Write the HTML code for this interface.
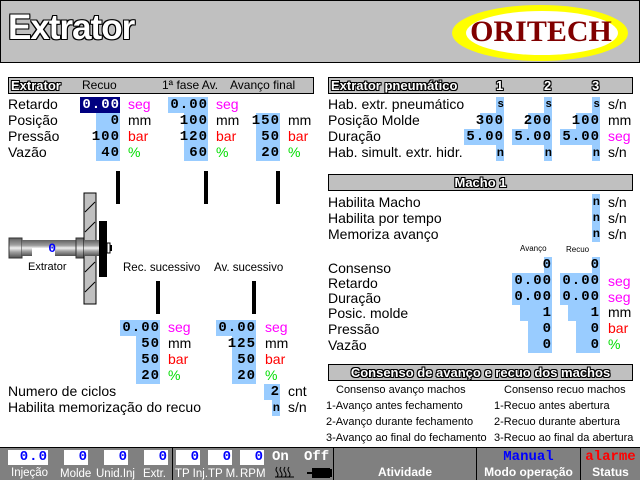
<!DOCTYPE html>
<html><head><meta charset="utf-8"><style>
*{margin:0;padding:0;box-sizing:border-box}
body{width:640px;height:480px;background:#fff;position:relative;overflow:hidden;font-family:"Liberation Sans","DejaVu Sans",sans-serif;font-size:13px;color:#000}
div,span{position:absolute}
.l{font-size:14px;line-height:16px;white-space:nowrap}
.s{font-size:11px;line-height:12px;white-space:nowrap}
.b{background:#99ccff;font-family:"Liberation Mono","DejaVu Sans Mono",monospace;font-weight:bold;font-size:14px;line-height:16px;height:16px;text-align:right;letter-spacing:1px;overflow:visible;direction:rtl}
.bar{background:#c0c0c0;border:1px solid #000;height:17px}
.ot{color:#fff;font-weight:bold;text-shadow:1px 0 #000,-1px 0 #000,0 1px #000,0 -1px #000,1px 1px #000,-1px -1px #000,1px -1px #000,-1px 1px #000;white-space:nowrap}
.m{color:#ff00ff}.r{color:#ff0000}.g{color:#00dd00}
.vb{background:#000;width:4px}
.wb{background:#fff;font-family:"Liberation Mono",monospace;font-weight:bold;color:#0000ff;font-size:14px;line-height:15px;height:15px;text-align:right;letter-spacing:1px;direction:rtl}
.fl{color:#fff;font-size:11.5px;line-height:12px;white-space:nowrap}
</style></head><body>
<!-- header -->
<div style="left:0;top:0;width:640px;height:63px;background:#c0c0c0;border:1px solid #000"></div>
<div class="ot" style="left:8px;top:9px;font-size:35px;line-height:38px;letter-spacing:-1px">Extrator</div>
<div style="left:452px;top:5px;width:176px;height:56px;border-radius:50%;background:#ffff00"></div>
<div style="left:466px;top:11px;width:152px;height:44px;border-radius:50%;background:#fff"></div>
<div style="left:456px;top:15px;width:170px;text-align:center;font-family:'Liberation Serif',serif;font-weight:bold;font-size:30px;line-height:34px;color:#800000">ORITECH</div>

<!-- left header -->
<div class="bar" style="left:8px;top:77px;width:306px"></div>
<div class="ot" style="left:11px;top:78px;font-size:13px;line-height:15px">Extrator</div>
<div class="s" style="left:82px;top:79px;font-size:12px">Recuo</div>
<div class="s" style="left:162px;top:79px;font-size:12px">1ª fase Av.</div>
<div class="s" style="left:230px;top:79px;font-size:12px">Avanço final</div>

<div class="l" style="left:8px;top:96px">Retardo</div>
<div class="l" style="left:8px;top:112px">Posição</div>
<div class="l" style="left:8px;top:128px">Pressão</div>
<div class="l" style="left:8px;top:144px">Vazão</div>

<div class="b" style="left:80px;top:97px;width:40px;background:#000080;color:#fff">0.00</div>
<div class="b" style="left:96px;top:113px;width:24px">0</div>
<div class="b" style="left:96px;top:129px;width:24px">100</div>
<div class="b" style="left:96px;top:145px;width:24px">40</div>
<div class="l m" style="left:128px;top:96px">seg</div>
<div class="l" style="left:128px;top:112px">mm</div>
<div class="l r" style="left:128px;top:128px">bar</div>
<div class="l g" style="left:128px;top:144px">%</div>

<div class="b" style="left:168px;top:97px;width:40px">0.00</div>
<div class="b" style="left:184px;top:113px;width:24px">100</div>
<div class="b" style="left:184px;top:129px;width:24px">120</div>
<div class="b" style="left:184px;top:145px;width:24px">60</div>
<div class="l m" style="left:216px;top:96px">seg</div>
<div class="l" style="left:216px;top:112px">mm</div>
<div class="l r" style="left:216px;top:128px">bar</div>
<div class="l g" style="left:216px;top:144px">%</div>

<div class="b" style="left:256px;top:113px;width:24px">150</div>
<div class="b" style="left:256px;top:129px;width:24px">50</div>
<div class="b" style="left:256px;top:145px;width:24px">20</div>
<div class="l" style="left:288px;top:112px">mm</div>
<div class="l r" style="left:288px;top:128px">bar</div>
<div class="l g" style="left:288px;top:144px">%</div>

<div class="vb" style="left:116px;top:171px;height:33px"></div>
<div class="vb" style="left:204px;top:171px;height:33px"></div>
<div class="vb" style="left:276px;top:171px;height:33px"></div>

<!-- mechanism -->
<svg style="position:absolute;left:0;top:180px" width="120" height="130">
<defs><linearGradient id="cy" x1="0" y1="0" x2="0" y2="1">
<stop offset="0" stop-color="#606060"/><stop offset="0.35" stop-color="#a0a0a0"/><stop offset="0.5" stop-color="#f0f0f0"/><stop offset="0.7" stop-color="#a0a0a0"/><stop offset="1" stop-color="#505050"/></linearGradient></defs>
<rect x="9" y="58" width="13" height="20" fill="url(#cy)" stroke="#333"/>
<rect x="22" y="60" width="54" height="16" fill="url(#cy)"/>
<rect x="32" y="68" width="23" height="8" fill="#fff"/>
<rect x="76" y="58" width="8" height="20" fill="url(#cy)" stroke="#333"/>
<rect x="84" y="13" width="12" height="111" fill="#c0c0c0" stroke="#000"/>
<path d="M85 32 L95 22 M85 52 L95 42 M85 72 L95 62 M85 92 L95 82 M85 112 L95 102" stroke="#000"/>
<rect x="84" y="60" width="22" height="16" fill="url(#cy)"/>
<rect x="99" y="41" width="8" height="56" fill="#000"/>
<rect x="107" y="63" width="3" height="10" fill="#fff" stroke="#000"/>
<rect x="110" y="65" width="2" height="6" fill="#000"/>
</svg>
<div style="left:32px;top:242px;width:24px;text-align:right;font-family:'Liberation Mono',monospace;font-weight:bold;font-size:13px;color:#0000ff;line-height:14px">0</div>
<div class="s" style="left:28px;top:261px;font-size:11px">Extrator</div>

<div class="s" style="left:123px;top:262px;font-size:11.5px">Rec. sucessivo</div>
<div class="s" style="left:214px;top:262px;font-size:11.5px">Av. sucessivo</div>
<div class="vb" style="left:156px;top:281px;height:33px"></div>
<div class="vb" style="left:252px;top:281px;height:33px"></div>

<div class="b" style="left:120px;top:320px;width:40px">0.00</div>
<div class="b" style="left:136px;top:336px;width:24px">50</div>
<div class="b" style="left:136px;top:352px;width:24px">50</div>
<div class="b" style="left:136px;top:368px;width:24px">20</div>
<div class="l m" style="left:168px;top:319px">seg</div>
<div class="l" style="left:168px;top:335px">mm</div>
<div class="l r" style="left:168px;top:351px">bar</div>
<div class="l g" style="left:168px;top:367px">%</div>

<div class="b" style="left:216px;top:320px;width:40px">0.00</div>
<div class="b" style="left:232px;top:336px;width:24px">125</div>
<div class="b" style="left:232px;top:352px;width:24px">50</div>
<div class="b" style="left:232px;top:368px;width:24px">20</div>
<div class="l m" style="left:265px;top:319px">seg</div>
<div class="l" style="left:265px;top:335px">mm</div>
<div class="l r" style="left:265px;top:351px">bar</div>
<div class="l g" style="left:265px;top:367px">%</div>

<div class="l" style="left:8px;top:383px">Numero de ciclos</div>
<div class="l" style="left:8px;top:399px">Habilita memorização do recuo</div>
<div class="b" style="left:264px;top:384px;width:16px">2</div>
<div class="b" style="left:272px;top:400px;width:8px;font-size:12px;letter-spacing:0">n</div>
<div class="l" style="left:288px;top:383px">cnt</div>
<div class="l" style="left:288px;top:399px">s/n</div>

<!-- right pneumatic -->
<div class="bar" style="left:328px;top:77px;width:305px"></div>
<div class="ot" style="left:331px;top:78px;font-size:13px;line-height:15px">Extrator pneumático</div>
<div class="ot" style="left:496px;top:78px;font-size:13px;line-height:15px">1</div>
<div class="ot" style="left:544px;top:78px;font-size:13px;line-height:15px">2</div>
<div class="ot" style="left:592px;top:78px;font-size:13px;line-height:15px">3</div>

<div class="l" style="left:328px;top:96px">Hab. extr. pneumático</div>
<div class="l" style="left:328px;top:112px">Posição Molde</div>
<div class="l" style="left:328px;top:128px">Duração</div>
<div class="l" style="left:328px;top:144px">Hab. simult. extr. hidr.</div>

<div class="b" style="left:496px;top:97px;width:8px;font-size:11px;letter-spacing:0">s</div>
<div class="b" style="left:480px;top:113px;width:24px">300</div>
<div class="b" style="left:464px;top:129px;width:40px">5.00</div>
<div class="b" style="left:496px;top:145px;width:8px;font-size:12px;letter-spacing:0">n</div>
<div class="b" style="left:544px;top:97px;width:8px;font-size:11px;letter-spacing:0">s</div>
<div class="b" style="left:528px;top:113px;width:24px">200</div>
<div class="b" style="left:512px;top:129px;width:40px">5.00</div>
<div class="b" style="left:544px;top:145px;width:8px;font-size:12px;letter-spacing:0">n</div>
<div class="b" style="left:592px;top:97px;width:8px;font-size:11px;letter-spacing:0">s</div>
<div class="b" style="left:576px;top:113px;width:24px">100</div>
<div class="b" style="left:560px;top:129px;width:40px">5.00</div>
<div class="b" style="left:592px;top:145px;width:8px;font-size:12px;letter-spacing:0">n</div>
<div class="l" style="left:608px;top:96px">s/n</div>
<div class="l" style="left:608px;top:112px">mm</div>
<div class="l m" style="left:608px;top:128px">seg</div>
<div class="l" style="left:608px;top:144px">s/n</div>

<!-- macho -->
<div class="bar" style="left:328px;top:174px;width:305px"></div>
<div class="ot" style="left:328px;top:175px;width:305px;text-align:center;font-size:13px;line-height:15px">Macho 1</div>
<div class="l" style="left:328px;top:194px">Habilita Macho</div>
<div class="l" style="left:328px;top:210px">Habilita por tempo</div>
<div class="l" style="left:328px;top:226px">Memoriza avanço</div>
<div class="b" style="left:592px;top:194px;width:8px;font-size:12px;letter-spacing:0">n</div>
<div class="b" style="left:592px;top:210px;width:8px;font-size:12px;letter-spacing:0">n</div>
<div class="b" style="left:592px;top:226px;width:8px;font-size:12px;letter-spacing:0">n</div>
<div class="l" style="left:608px;top:194px">s/n</div>
<div class="l" style="left:608px;top:210px">s/n</div>
<div class="l" style="left:608px;top:226px">s/n</div>
<div class="s" style="left:520px;top:243px;font-size:8px">Avanço</div>
<div class="s" style="left:566px;top:244px;font-size:8px">Recuo</div>

<div class="l" style="left:328px;top:260px">Consenso</div>
<div class="l" style="left:328px;top:275px">Retardo</div>
<div class="l" style="left:328px;top:290px">Duração</div>
<div class="l" style="left:328px;top:305px">Posic. molde</div>
<div class="l" style="left:328px;top:321px">Pressão</div>
<div class="l" style="left:328px;top:337px">Vazão</div>

<div class="b" style="left:544px;top:257px;width:8px">0</div>
<div class="b" style="left:512px;top:273px;width:40px">0.00</div>
<div class="b" style="left:512px;top:289px;width:40px">0.00</div>
<div class="b" style="left:520px;top:305px;width:32px">1</div>
<div class="b" style="left:528px;top:321px;width:24px">0</div>
<div class="b" style="left:528px;top:337px;width:24px">0</div>
<div class="b" style="left:592px;top:257px;width:8px">0</div>
<div class="b" style="left:560px;top:273px;width:40px">0.00</div>
<div class="b" style="left:560px;top:289px;width:40px">0.00</div>
<div class="b" style="left:568px;top:305px;width:32px">1</div>
<div class="b" style="left:576px;top:321px;width:24px">0</div>
<div class="b" style="left:576px;top:337px;width:24px">0</div>
<div class="l m" style="left:608px;top:273px">seg</div>
<div class="l m" style="left:608px;top:289px">seg</div>
<div class="l" style="left:608px;top:304px">mm</div>
<div class="l r" style="left:608px;top:320px">bar</div>
<div class="l g" style="left:608px;top:336px">%</div>

<div class="bar" style="left:328px;top:364px;width:305px"></div>
<div class="ot" style="left:328px;top:365px;width:305px;text-align:center;font-size:13px;line-height:15px">Consenso de avanço e recuo dos machos</div>
<div class="s" style="left:336px;top:384px">Consenso avanço machos</div>
<div class="s" style="left:504px;top:384px">Consenso recuo machos</div>
<div class="s" style="left:326px;top:400px">1-Avanço antes fechamento</div>
<div class="s" style="left:326px;top:416px">2-Avanço durante fechamento</div>
<div class="s" style="left:326px;top:432px">3-Avanço ao final do fechamento</div>
<div class="s" style="left:494px;top:400px">1-Recuo antes abertura</div>
<div class="s" style="left:494px;top:416px">2-Recuo durante abertura</div>
<div class="s" style="left:494px;top:432px">3-Recuo ao final da abertura</div>

<!-- footer -->
<div style="left:0;top:447px;width:640px;height:33px;background:#808080;border-top:1px solid #000"></div>
<div style="left:172px;top:447px;width:1px;height:33px;background:#000"></div>
<div style="left:333px;top:447px;width:1px;height:33px;background:#000"></div>
<div style="left:476px;top:447px;width:1px;height:33px;background:#000"></div>
<div style="left:580px;top:447px;width:1px;height:33px;background:#000"></div>
<div class="wb" style="left:8px;top:450px;width:40px">0.0</div>
<div class="wb" style="left:64px;top:450px;width:24px">0</div>
<div class="wb" style="left:104px;top:450px;width:24px">0</div>
<div class="wb" style="left:144px;top:450px;width:24px">0</div>
<div class="wb" style="left:176px;top:450px;width:24px">0</div>
<div class="wb" style="left:208px;top:450px;width:24px">0</div>
<div class="wb" style="left:240px;top:450px;width:24px">0</div>
<div class="fl" style="left:11px;top:467px">Injeção</div>
<div class="fl" style="left:60px;top:468px">Molde</div>
<div class="fl" style="left:96px;top:468px">Unid.Inj</div>
<div class="fl" style="left:143px;top:468px">Extr.</div>
<div class="fl" style="left:175px;top:468px">TP Inj.</div>
<div class="fl" style="left:208px;top:468px">TP M.</div>
<div class="fl" style="left:240px;top:468px">RPM</div>
<div style="left:272px;top:450px;color:#fff;font-family:'Liberation Mono',monospace;font-weight:bold;font-size:14px;line-height:15px">On</div>
<div style="left:304px;top:450px;color:#fff;font-family:'Liberation Mono',monospace;font-weight:bold;font-size:14px;line-height:15px">Off</div>
<svg style="position:absolute;left:274px;top:465px" width="60" height="14">
<path d="M3 2 q-2 3 0 5 q2 3 0 5 M7 2 q-2 3 0 5 q2 3 0 5 M11 2 q-2 3 0 5 q2 3 0 5 M15 2 q-2 3 0 5 q2 3 0 5 M1 12 H20" stroke="#000" fill="none"/>
<rect x="38" y="3" width="18" height="10" fill="#000"/><rect x="33" y="7" width="5" height="2" fill="#000"/><rect x="56" y="4" width="2" height="8" fill="#000"/>
</svg>
<div style="left:334px;top:465px;width:142px;text-align:center;color:#fff;font-weight:bold;font-size:12px;line-height:14px">Atividade</div>
<div style="left:477px;top:450px;width:103px;text-align:center;color:#0000ff;font-family:'Liberation Mono',monospace;font-weight:bold;font-size:14px;line-height:15px">Manual</div>
<div style="left:477px;top:465px;width:103px;text-align:center;color:#fff;font-weight:bold;font-size:12px;line-height:14px">Modo operação</div>
<div style="left:581px;top:450px;width:59px;text-align:center;color:#ff0000;font-family:'Liberation Mono',monospace;font-weight:bold;font-size:14px;line-height:15px">alarme</div>
<div style="left:581px;top:465px;width:59px;text-align:center;color:#fff;font-weight:bold;font-size:12px;line-height:14px">Status</div>
</body></html>
